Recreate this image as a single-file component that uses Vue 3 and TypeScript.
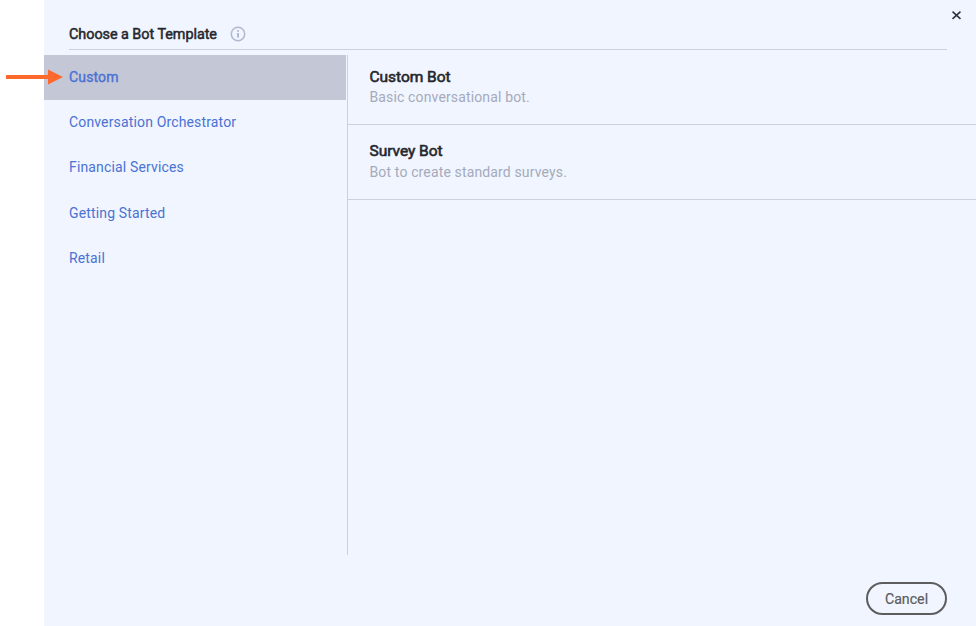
<script setup lang="ts">
import { ref } from 'vue'

interface Template {
  name: string
  description: string
}

const categories: string[] = [
  'Custom',
  'Conversation Orchestrator',
  'Financial Services',
  'Getting Started',
  'Retail',
]
const selected = ref<string>('Custom')

const templates: Template[] = [
  { name: 'Custom Bot', description: 'Basic conversational bot.' },
  { name: 'Survey Bot', description: 'Bot to create standard surveys.' },
]
</script>

<template>
  <div class="page">
    <section class="dialog">
      <header class="header">
        <h1 class="title">Choose a Bot Template</h1>
        <svg class="info" width="16" height="16" viewBox="0 0 16 16" fill="none">
          <circle cx="8" cy="8" r="6.7" stroke="#b2b8cf" stroke-width="1.5" />
          <path d="M8 7v4.6M8 4.2v1.6" stroke="#a6adc7" stroke-width="1.7" />
        </svg>
      </header>
      <div class="body">
        <nav class="sidebar">
          <button
            v-for="category in categories"
            :key="category"
            class="category"
            :class="{ active: category === selected }"
            @click="selected = category"
          >
            {{ category }}
          </button>
        </nav>
        <div class="templates">
          <article v-for="item in templates" :key="item.name" class="template">
            <h2 class="name">{{ item.name }}</h2>
            <p class="description">{{ item.description }}</p>
          </article>
        </div>
      </div>
      <footer class="footer">
        <button class="cancel">Cancel</button>
      </footer>
      <button class="close" aria-label="Close">
        <svg width="9" height="9" viewBox="0 0 9 9">
          <path d="M0.5 0.6L8.5 7.8M8.5 0.6L0.5 7.8" stroke="#303136" stroke-width="1.6" />
        </svg>
      </button>
    </section>
    <svg class="pointer" width="57" height="16" viewBox="0 0 57 16">
      <path d="M0 6h42V0.5L57 8L42 15.5V10H0z" fill="#fb692c" />
    </svg>
  </div>
</template>

<style>
body {
  margin: 0;
  background: #fff;
}
</style>

<style scoped>
.page {
  position: relative;
  box-sizing: border-box;
  height: 626px;
  padding-left: 44px;
  overflow: hidden;
  font-family: Roboto, "Liberation Sans", sans-serif;
}
.dialog {
  position: relative;
  display: flex;
  flex-direction: column;
  height: 100%;
  background: #f0f5ff;
}
button {
  margin: 0;
  padding: 0;
  border: 0;
  background: none;
  font: inherit;
  text-align: left;
}
.header {
  display: flex;
  align-items: center;
  gap: 13px;
  box-sizing: border-box;
  height: 50px;
  margin: 0 29px 5px 25px;
  padding-top: 19px;
  border-bottom: 1px solid #ccd1e0;
}
.title {
  margin: 0;
  font-size: 14.4px;
  line-height: 18px;
  padding-top: 1px;
  font-weight: 400;
  letter-spacing: -0.04px;
  -webkit-text-stroke: 0.5px #26272b;
  color: #26272b;
}
.info {
  flex: none;
}
.body {
  display: flex;
  height: 500px;
}
.sidebar {
  display: flex;
  flex-direction: column;
  box-sizing: border-box;
  width: 304px;
  padding-right: 1px;
  border-right: 1px solid #ccd1e0;
}
.category {
  flex: none;
  height: 45px;
  padding: 0 0 1px 25px;
  font-size: 14px;
  line-height: 18px;
  letter-spacing: 0.15px;
  color: #4a72d4;
}
.category:nth-child(3) {
  margin-bottom: 1px;
}
.category.active {
  background: #c4c7d6;
  letter-spacing: 0.15px;
  -webkit-text-stroke: 0.4px #4a72d4;
}
.templates {
  flex: 1;
}
.template {
  box-sizing: border-box;
  height: 75px;
  padding: 16px 21.5px 0;
  border-bottom: 1px solid #ccd1e0;
}
.template:first-child {
  height: 70px;
  padding-top: 12px;
}
.name {
  margin: 0;
  font-size: 15.5px;
  line-height: 20px;
  font-weight: 400;
  letter-spacing: -0.04px;
  -webkit-text-stroke: 0.6px #26272b;
  color: #26272b;
}
.description {
  margin: 0;
  font-size: 14px;
  line-height: 21px;
  letter-spacing: 0.14px;
  color: #a5aaba;
}
.template + .template .description {
  margin-top: 1px;
}
.footer {
  display: flex;
  justify-content: flex-end;
  padding: 27px 29px 0 0;
}
.cancel {
  box-sizing: border-box;
  width: 81px;
  height: 33px;
  border: 2px solid #5d5d5d;
  border-radius: 17px;
  font-size: 14.2px;
  line-height: 18px;
  text-align: center;
  color: #5d5d5d;
  -webkit-text-stroke: 0.2px #5d5d5d;
}
.close {
  position: absolute;
  top: 11px;
  right: 15px;
  display: flex;
}
.pointer {
  position: absolute;
  top: 69px;
  left: 6px;
}
</style>
